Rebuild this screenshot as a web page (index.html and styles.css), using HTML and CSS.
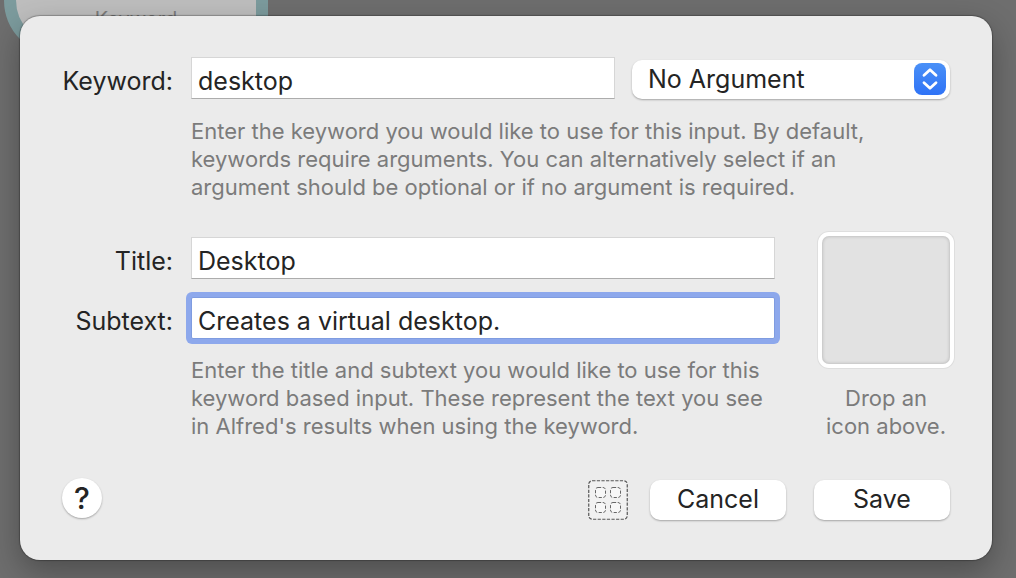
FILE: index.html
```html
<!DOCTYPE html>
<html lang="en">
<head>
<meta charset="utf-8">
<meta name="viewport" content="width=device-width, initial-scale=1">
<title>Keyword Input</title>
<link rel="stylesheet" href="styles.css">
</head>
<body>
<div class="node" aria-hidden="true">Keyword</div>
<main class="sheet">
  <form class="form">
    <label class="label" for="keyword">Keyword:</label>
    <div class="keyword-row">
      <input class="field keyword-field" id="keyword" type="text" value="desktop">
      <div class="popup">
        <select class="popup-select" aria-label="Argument">
          <option>No Argument</option>
          <option>Argument Required</option>
          <option>Argument Optional</option>
        </select>
        <svg class="popup-arrows" viewBox="0 0 32 32" aria-hidden="true">
          <defs><linearGradient id="blue" x1="0" y1="0" x2="0" y2="1"><stop offset="0" stop-color="#4a90f7"/><stop offset="1" stop-color="#2f73f6"/></linearGradient></defs>
          <rect width="32" height="32" rx="8" fill="url(#blue)"/>
          <path d="M10 12.2 16 6.8l6 5.4M10 19.8l6 5.4 6-5.4" fill="none" stroke="#fff" stroke-width="2.8" stroke-linecap="round" stroke-linejoin="round"/>
        </svg>
      </div>
    </div>
    <p class="hint hint-keyword">Enter the keyword you would like to use for this input. By default, keywords require arguments. You can alternatively select if an argument should be optional or if no argument is required.</p>

    <label class="label" for="title">Title:</label>
    <input class="field" id="title" type="text" value="Desktop">
    <label class="label label-subtext" for="subtext">Subtext:</label>
    <input class="field field-focused" id="subtext" type="text" value="Creates a virtual desktop.">
    <p class="hint hint-text">Enter the title and subtext you would like to use for this keyword based input. These represent the text you see in Alfred's results when using the keyword.</p>
    <div class="icon-drop">
      <button class="well" type="button" aria-label="Icon"></button>
      <p class="hint caption">Drop an<br>icon above.</p>
    </div>

    <footer class="footer">
      <button class="help" type="button" aria-label="Help">?</button>
      <button class="grid-button" type="button" aria-label="Layout">
        <svg class="grid-icon" viewBox="0 0 40 40" aria-hidden="true">
          <rect x=".75" y=".75" width="38.5" height="38.5" rx="3.5" fill="#f1f1f1" stroke="#555" stroke-width="1.2" stroke-dasharray="3.2 1.4"/>
          <g fill="#f7f7f7" stroke="#666" stroke-width="1" stroke-dasharray="3.2 1.5">
            <rect x="7.5" y="7.5" width="10" height="10" rx="2.5"/>
            <rect x="22.5" y="7.5" width="10" height="10" rx="2.5"/>
            <rect x="7.5" y="22.5" width="10" height="10" rx="2.5"/>
            <rect x="22.5" y="22.5" width="10" height="10" rx="2.5"/>
          </g>
        </svg>
      </button>
      <button class="button" type="button">Cancel</button>
      <button class="button" type="submit">Save</button>
    </footer>
  </form>
</main>
</body>
</html>
```
FILE: styles.css
```css
* { box-sizing: border-box; }

body {
  margin: 0;
  padding: 16px 24px 18px 20px;
  background: #6e6e6e;
  color: #242424;
  font-family: Inter, "Liberation Sans", sans-serif;
  font-size: 25px;
  line-height: 32px;
}

input, select, button { font: inherit; color: inherit; }

/* Workflow node behind the sheet */
.node {
  position: absolute;
  top: -44px;
  left: 4px;
  width: 264px;
  height: 100px;
  padding-top: 35px;
  border: 12px solid #7c9b9d;
  border-radius: 0 0 16px 56px;
  background: #bebebe;
  color: #7c7c7c;
  font-size: 20px;
  text-align: center;
}

.sheet {
  position: relative;
  padding: 41px 42px 40px;
  border-radius: 20px;
  background: #ebebeb;
  box-shadow: 0 0 1px 1px rgba(0, 0, 0, 0.25), 0 12px 32px rgba(0, 0, 0, 0.3);
}

.form {
  display: grid;
  grid-template-columns: 111px 1fr 128px;
  column-gap: 18px;
}

.label {
  padding-top: 8px;
  text-align: right;
  white-space: nowrap;
  justify-self: end;
}

.keyword-row {
  grid-column: 2 / 4;
  display: flex;
  align-items: flex-end;
  gap: 17px;
}

.field {
  width: 100%;
  height: 42px;
  padding: 6px 6px 0;
  border: 1px solid #d6d6d6;
  border-bottom-color: #acacac;
  border-radius: 0;
  background: #fff;
  outline: none;
}

.keyword-field { flex: 1; min-width: 0; }

.field-focused {
  margin-top: 18px;
  border-color: #7f9ce0;
  border-radius: 2px;
  box-shadow: 0 0 0 5px #8da8ec;
}

.label-subtext { padding-top: 26px; }

.popup {
  position: relative;
  flex: 0 0 318px;
}

.popup-select {
  display: block;
  width: 100%;
  height: 39px;
  padding: 0 44px 2px 16px;
  border: 0;
  border-radius: 10px;
  appearance: none;
  background: #fff;
  box-shadow: 0 1px 2px rgba(0, 0, 0, 0.3);
}

.popup-arrows {
  position: absolute;
  top: 3px;
  right: 4px;
  width: 32px;
  height: 32px;
  pointer-events: none;
}

.hint {
  margin: 0;
  color: #7b7b7b;
  font-size: 22px;
  line-height: 28px;
}

.hint-keyword {
  grid-column: 2 / 4;
  max-width: 720px;
  margin: 18px 0 36px;
}

.hint-text {
  grid-column: 2;
  margin-top: 17px;
}

.form > .field, .hint-text { width: auto; margin-right: 29px; }

.icon-drop {
  grid-column: 3;
  grid-row: 3 / 6;
  margin-top: -1px;
}

.well {
  display: block;
  width: 128px;
  height: 128px;
  border: 0;
  border-radius: 7px;
  background: #e2e2e2;
  box-shadow: inset 0 0 3px 1px rgba(0, 0, 0, 0.14), 0 0 0 4px #fff, 0 0 0 5px #dedede;
}

.caption {
  margin-top: 20px;
  text-align: center;
  white-space: nowrap;
}

.footer {
  grid-column: 1 / 4;
  display: flex;
  align-items: flex-end;
  min-height: 42px;
  margin-top: 38px;
}

.help {
  align-self: flex-start;
  width: 40px;
  height: 40px;
  margin-right: auto;
  padding: 0;
  border: 0;
  border-radius: 50%;
  background: #fff;
  box-shadow: 0 1px 2px rgba(0, 0, 0, 0.3);
  font-size: 30px;
  font-weight: 500;
}

.grid-button {
  width: 40px;
  height: 40px;
  margin-right: 22px;
  padding: 0;
  border: 0;
  background: none;
}

.grid-icon { display: block; }

.button {
  width: 136px;
  height: 40px;
  padding: 0 0 2px;
  border: 0;
  border-radius: 10px;
  background: #fff;
  box-shadow: 0 1px 2px rgba(0, 0, 0, 0.3);
}

.button + .button { margin-left: 28px; }
```
